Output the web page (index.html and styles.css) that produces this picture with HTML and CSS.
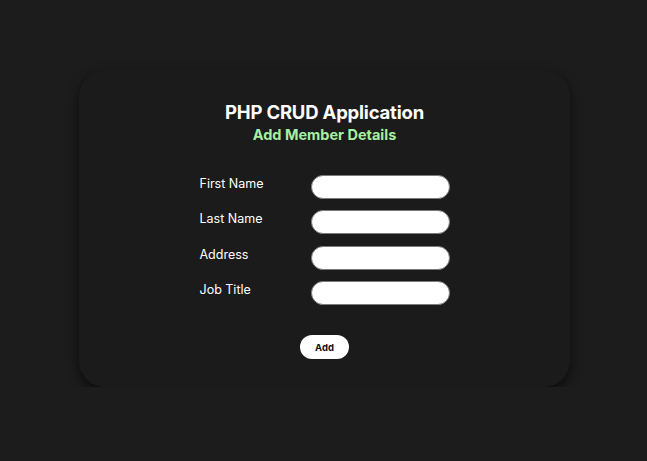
FILE: index.html
```html
<!DOCTYPE html>
<html>
<head>
<meta charset="utf-8">
<link rel="stylesheet" href="styles.css">
</head>
<body>
<div class="page">
  <div class="card">
    <h1 class="title">PHP CRUD Application</h1>
    <h2 class="subtitle">Add Member Details</h2>
    <form class="form">
      <div class="rows">
        <label class="label">First Name</label><input class="field" type="text">
        <label class="label">Last Name</label><input class="field" type="text">
        <label class="label">Address</label><input class="field" type="text">
        <label class="label">Job Title</label><input class="field" type="text">
      </div>
      <button class="btn" type="button">Add</button>
    </form>
  </div>
</div>
</body>
</html>
```
FILE: styles.css
```css
html, body {
  margin: 0;
  padding: 0;
  background: #1c1c1c;
  font-family: "Inter", "Noto Sans", sans-serif;
  color: #fff;
}
.page {
  padding-top: 70px;
  display: flex;
  justify-content: center;
  padding-left: 2px;
}
.card {
  width: 491px;
  height: 317px;
  box-sizing: border-box;
  background: #1b1b1b;
  border-radius: 26px;
  box-shadow: 0 5px 12px rgba(0,0,0,0.6);
  display: flex;
  flex-direction: column;
  align-items: center;
  padding-top: 30px;
}
.title {
  margin: 0;
  font-size: 18.5px;
  font-weight: 700;
  line-height: 24px;
  letter-spacing: -0.2px;
}
.subtitle {
  margin: 2px 0 0;
  font-size: 14.5px;
  font-weight: 700;
  line-height: 18px;
  color: #a6f0a2;
}
.form {
  display: flex;
  flex-direction: column;
  align-items: center;
  margin-top: 31px;
}
.rows {
  display: grid;
  grid-template-columns: 111px 139px;
  row-gap: 11.4px;
  align-items: start;
}
.label {
  font-size: 12.5px;
  line-height: 18px;
  padding-top: 0;
}
.field {
  width: 139px;
  height: 24px;
  box-sizing: border-box;
  border: 1px solid #7a7a7a;
  border-radius: 12px;
  background: #fff;
  outline: none;
}
.btn {
  margin-top: 30px;
  width: 49px;
  height: 24px;
  border: none;
  border-radius: 12px;
  background: #fff;
  color: #111;
  font-family: inherit;
  font-size: 9.5px;
  font-weight: 700;
  padding: 0;
}
```
